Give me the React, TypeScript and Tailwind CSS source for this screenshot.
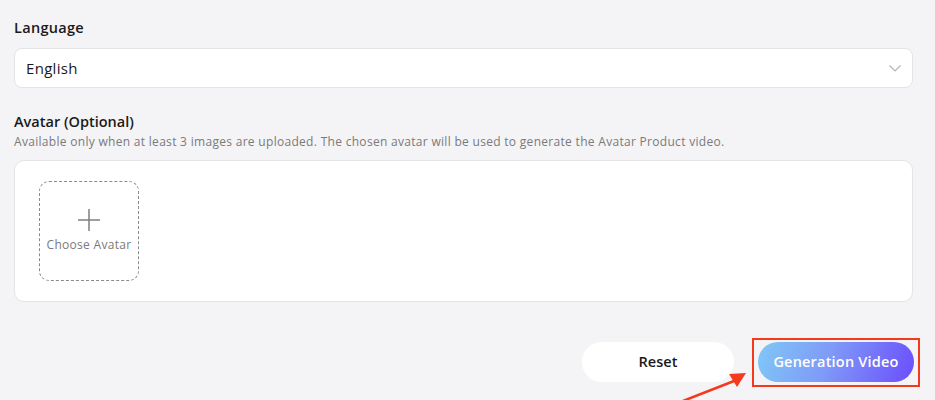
import React from "react";

export default function App() {
  return (
    <div className="w-[935px] h-[400px] overflow-hidden bg-[#f4f4f6] px-[14px] pt-[18px] relative" style={{ fontFamily: '"Open Sans", "Lato", sans-serif' }}>
      <div className="text-[14.5px] font-semibold text-[#1a1a1a] leading-[20px] tracking-[0.3px]">Language</div>
      <div className="mt-[10px] h-[40px] w-[899px] rounded-[8px] border border-[#e4e4e7] bg-white flex items-center justify-between pl-[11px] pr-[10px]">
        <span className="text-[15px] text-[#1a1a1a] font-medium tracking-[0.3px]">English</span>
        <svg width="14" height="14" viewBox="0 0 14 14" fill="none" stroke="#b5b5b5" strokeWidth="1.2">
          <path d="M1.5 4.5 L7 10 L12.5 4.5" />
        </svg>
      </div>
      <div className="mt-[24px] text-[14.5px] font-semibold text-[#1a1a1a] leading-[20px]">Avatar (Optional)</div>
      <div className="mt-[2px] text-[12px] text-[#7a7a7a] leading-[16px] tracking-[0.3px]">
        Available only when at least 3 images are uploaded. The chosen avatar will be used to generate the Avatar Product video.
      </div>
      <div className="mt-[10px] h-[142px] w-[899px] rounded-[10px] border border-[#e4e4e7] bg-white px-[24px] pt-[20px]">
        <div className="w-[100px] h-[100px] rounded-[10px] border border-dashed border-[#8a8a8a] flex flex-col items-center justify-center">
          <svg width="24" height="24" viewBox="0 0 24 24" fill="none" stroke="#808080" strokeWidth="1.5">
            <path d="M12 1 V23 M1 12 H23" />
          </svg>
          <div className="mt-[4px] text-[12px] text-[#7a7a7a] font-medium tracking-[0.3px]">Choose Avatar</div>
        </div>
      </div>
      <div className="mt-[40px] flex justify-end gap-[24px] pr-[7px]">
        <button className="w-[152px] h-[40px] rounded-full bg-white text-[14.5px] font-semibold text-[#1a1a1a]">Reset</button>
        <div className="relative">
          <button className="w-[156px] h-[40px] rounded-full text-white text-[14.5px] font-semibold tracking-[0.2px] bg-[linear-gradient(110deg,#80c8f6_0%,#7f9af7_45%,#6b4dfc_100%)]">
            Generation Video
          </button>
          <div className="absolute -left-[6px] -top-[4px] w-[168px] h-[49px] border-2 border-[#f4391c]" />
        </div>
      </div>
      <svg className="absolute left-0 top-0" width="935" height="400" viewBox="0 0 935 400" fill="none">
        <path d="M683 401 L734 381" stroke="#f4391c" strokeWidth="2.5" />
        <polygon points="746,373 729,374 737,387" fill="#f4391c" />
      </svg>
    </div>
  );
}
